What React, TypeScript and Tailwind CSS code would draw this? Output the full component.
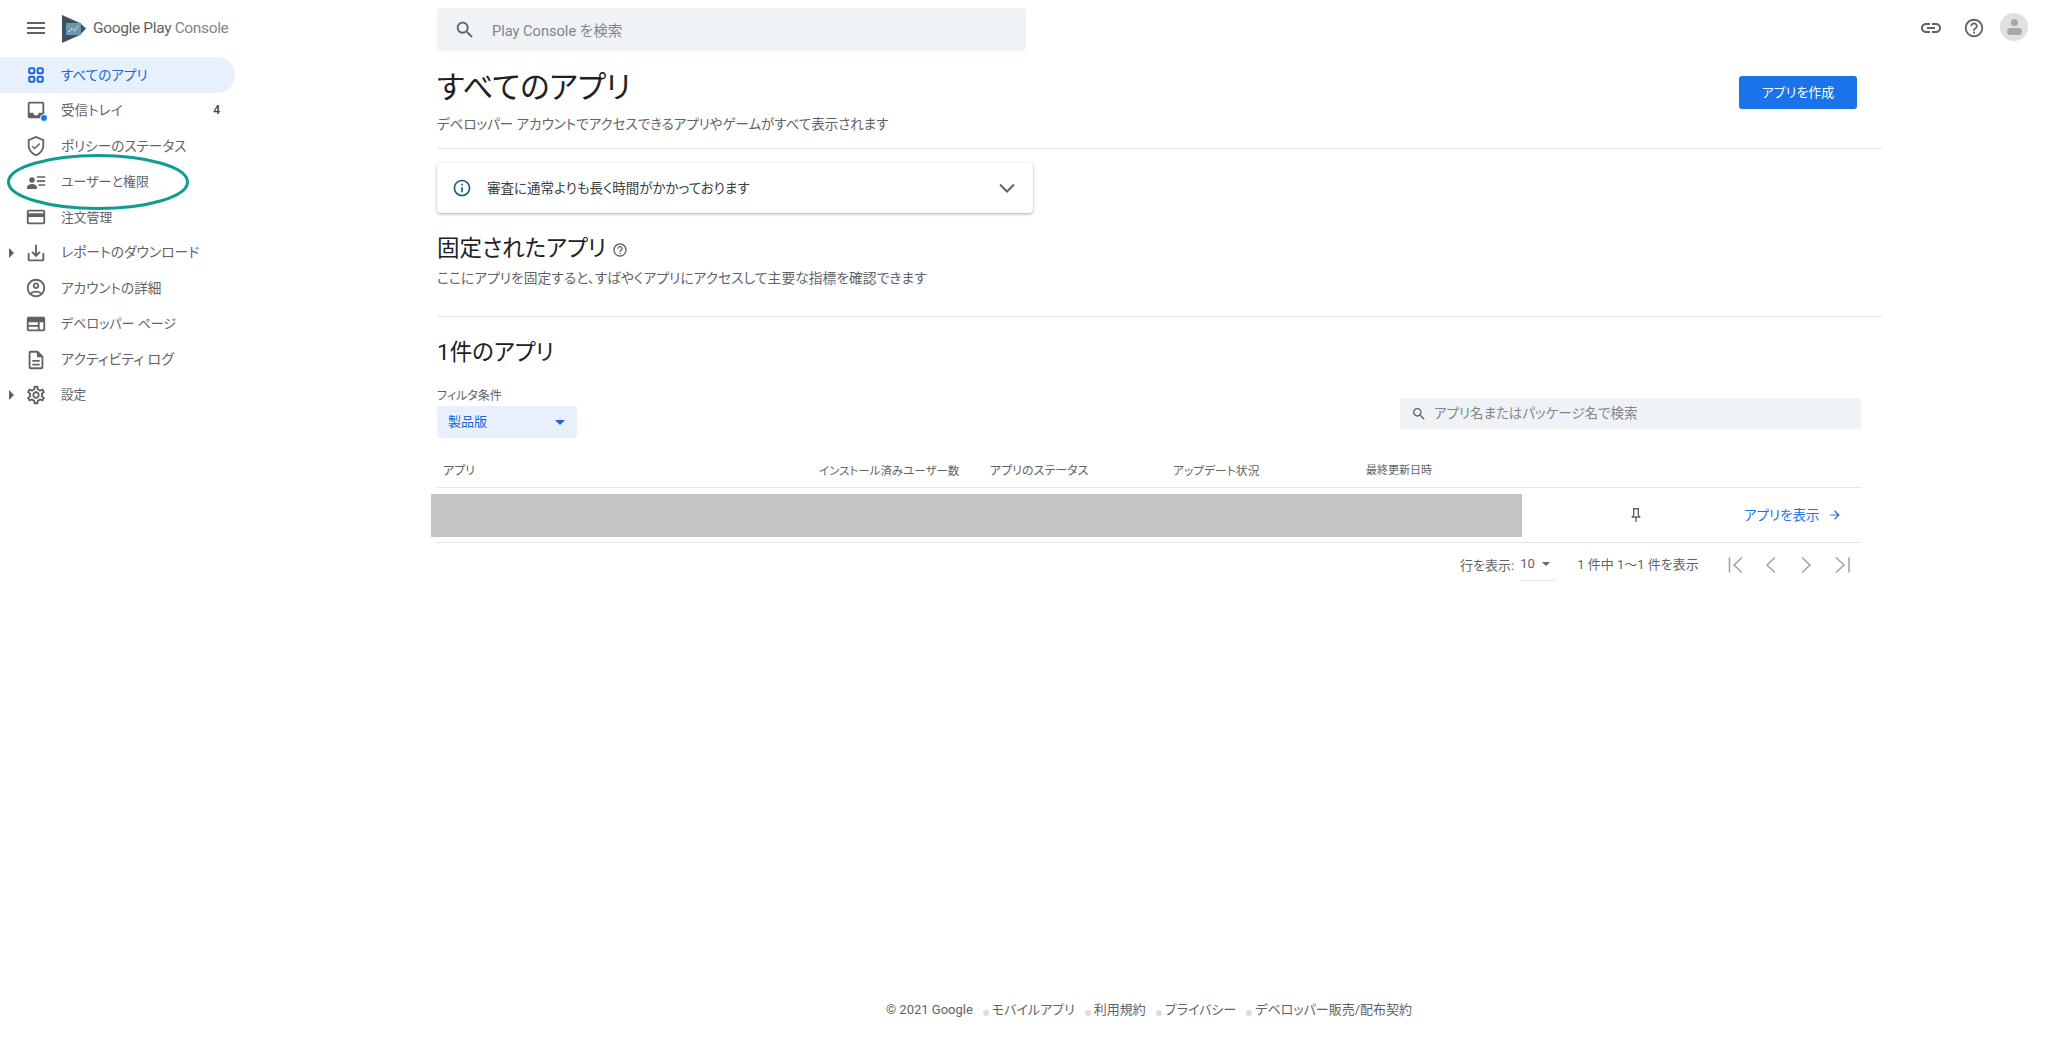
import React from "react";

const ICONS: Record<string, string> = {
  menu: "M3 18h18v-2H3v2zm0-5h18v-2H3v2zm0-7v2h18V6H3z",
  inbox: "M19 3H5c-1.1 0-2 .9-2 2v14c0 1.1.9 2 2 2h14c1.1 0 2-.9 2-2V5c0-1.1-.9-2-2-2zm0 2v10h-4c0 1.66-1.35 3-3 3s-3-1.34-3-3H5V5h14z",
  shield: "M12 1L3 5v6c0 5.55 3.84 10.74 9 12 5.16-1.26 9-6.45 9-12V5l-9-4zm7 10c0 4.52-2.98 8.69-7 9.93-4.02-1.24-7-5.41-7-9.93V6.3l7-3.11 7 3.11V11zm-10.6.6L7.3 12.7l3.2 3.2 6.2-6.2-1.1-1.1-5.1 5.1z",
  users: "M7.6 12.8a3 3 0 1 0 0-6 3 3 0 0 0 0 6zM2.2 19.6v-2c0-2.2 3.4-3.4 5.4-3.4s5.4 1.2 5.4 3.4v2H2.2zM13 5.7h9v1.7h-9zM13 10.2h9v1.7h-9zM14.6 14.5H22v1.7h-7.4z",
  card: "M20 4H4c-1.11 0-1.99.89-1.99 2L2 18c0 1.11.89 2 2 2h16c1.11 0 2-.89 2-2V6c0-1.11-.89-2-2-2zm0 14H4v-6h16v6zm0-10H4V6h16v2z",
  download: "M19 12v7H5v-7H3v7c0 1.1.9 2 2 2h14c1.1 0 2-.9 2-2v-7h-2zm-6 .67l2.59-2.58L17 11.5l-5 5-5-5 1.41-1.41L11 12.67V3h2z",
  account: "M12 2C6.48 2 2 6.48 2 12s4.48 10 10 10 10-4.48 10-10S17.52 2 12 2zM7.35 18.5C8.66 17.56 10.26 17 12 17s3.34.56 4.65 1.5c-1.31.94-2.91 1.5-4.65 1.5s-3.34-.56-4.65-1.5zm10.79-1.38C16.45 15.8 14.32 15 12 15s-4.45.8-6.14 2.12C4.7 15.73 4 13.95 4 12c0-4.42 3.58-8 8-8s8 3.58 8 8c0 1.95-.7 3.73-1.86 5.12zM12 6c-1.93 0-3.5 1.57-3.5 3.5S10.07 13 12 13s3.5-1.57 3.5-3.5S13.93 6 12 6zm0 5c-.83 0-1.5-.67-1.5-1.5S11.17 8 12 8s1.5.67 1.5 1.5S12.83 11 12 11z",
  web: "M20 4H4a2 2 0 0 0-2 2v12a2 2 0 0 0 2 2h16a2 2 0 0 0 2-2V6a2 2 0 0 0-2-2zM4 18v-3h10v3H4zm0-5v-3h10v3H4zm12 5v-8h4v8h-4z",
  description: "M8 16h8v2H8zm0-4h8v2H8zm6-10H6c-1.1 0-2 .9-2 2v16c0 1.1.89 2 1.99 2H18c1.1 0 2-.9 2-2V8l-6-6zm4 18H6V4h7v5h5v11z",
  settings: "M19.43 12.98c.04-.32.07-.64.07-.98 0-.34-.03-.66-.07-.98l2.11-1.65c.19-.15.24-.42.12-.64l-2-3.46c-.09-.16-.26-.25-.44-.25-.06 0-.12.01-.17.03l-2.49 1c-.52-.4-1.08-.73-1.69-.98l-.38-2.65C14.46 2.18 14.25 2 14 2h-4c-.25 0-.46.18-.49.42l-.38 2.65c-.61.25-1.17.59-1.69.98l-2.49-1c-.06-.02-.12-.03-.18-.03-.17 0-.34.09-.43.25l-2 3.46c-.13.22-.07.49.12.64l2.11 1.65c-.04.32-.07.65-.07.98 0 .33.03.66.07.98l-2.11 1.65c-.19.15-.24.42-.12.64l2 3.46c.09.16.26.25.44.25.06 0 .12-.01.17-.03l2.49-1c.52.4 1.08.73 1.69.98l.38 2.65c.03.24.24.42.49.42h4c.25 0 .46-.18.49-.42l.38-2.65c.61-.25 1.17-.59 1.69-.98l2.49 1c.06.02.12.03.18.03.17 0 .34-.09.43-.25l2-3.46c.12-.22.07-.49-.12-.64l-2.11-1.65zm-1.98-1.71c.04.31.05.52.05.73 0 .21-.02.43-.05.73l-.14 1.13.89.7 1.08.84-.7 1.21-1.27-.51-1.04-.42-.9.68c-.43.32-.84.56-1.25.73l-1.06.43-.16 1.13-.2 1.35h-1.4l-.19-1.35-.16-1.13-1.06-.43c-.43-.18-.83-.41-1.23-.71l-.91-.7-1.06.43-1.27.51-.7-1.21 1.08-.84.89-.7-.14-1.13c-.03-.31-.05-.54-.05-.74s.02-.43.05-.73l.14-1.13-.89-.7-1.08-.84.7-1.21 1.27.51 1.04.42.9-.68c.43-.32.84-.56 1.25-.73l1.06-.43.16-1.13.2-1.35h1.39l.19 1.35.16 1.13 1.06.43c.43.18.83.41 1.23.71l.91.7 1.06-.43 1.27-.51.7 1.21-1.07.85-.89.7.14 1.13zM12 8c-2.21 0-4 1.79-4 4s1.79 4 4 4 4-1.79 4-4-1.79-4-4-4zm0 6c-1.1 0-2-.9-2-2s.9-2 2-2 2 .9 2 2-.9 2-2 2z",
  search: "M15.5 14h-.79l-.28-.27C15.41 12.59 16 11.11 16 9.5 16 5.91 13.09 3 9.5 3S3 5.91 3 9.5 5.91 16 9.5 16c1.61 0 3.09-.59 4.23-1.57l.27.28v.79l5 4.99L20.49 19l-4.99-5zm-6 0C7.01 14 5 11.99 5 9.5S7.01 5 9.5 5 14 7.01 14 9.5 11.99 14 9.5 14z",
  link: "M3.9 12c0-1.71 1.39-3.1 3.1-3.1h4V7H7c-2.76 0-5 2.24-5 5s2.24 5 5 5h4v-1.9H7c-1.71 0-3.1-1.39-3.1-3.1zM8 13h8v-2H8v2zm9-6h-4v1.9h4c1.71 0 3.1 1.39 3.1 3.1s-1.39 3.1-3.1 3.1h-4V17h4c2.76 0 5-2.24 5-5s-2.24-5-5-5z",
  help: "M11 18h2v-2h-2v2zm1-16C6.48 2 2 6.48 2 12s4.48 10 10 10 10-4.48 10-10S17.52 2 12 2zm0 18c-4.41 0-8-3.59-8-8s3.59-8 8-8 8 3.59 8 8-3.59 8-8 8zm0-14c-2.21 0-4 1.79-4 4h2c0-1.1.9-2 2-2s2 .9 2 2c0 2-3 1.75-3 5h2c0-2.25 3-2.5 3-5 0-2.21-1.79-4-4-4z",
  info: "M11 7h2v2h-2zm0 4h2v6h-2zm1-9C6.48 2 2 6.48 2 12s4.48 10 10 10 10-4.48 10-10S17.52 2 12 2zm0 18c-4.41 0-8-3.59-8-8s3.59-8 8-8 8 3.59 8 8-3.59 8-8 8z",
  arrow: "M12 4l-1.41 1.41L16.17 11H4v2h12.17l-5.58 5.59L12 20l8-8z",
};

function Icon({ name, className }: { name: string; className?: string }) {
  return (
    <svg viewBox="0 0 24 24" fill="currentColor" fillRule="evenodd" className={className}>
      <path d={ICONS[name]} />
    </svg>
  );
}

function AppsIcon({ className }: { className?: string }) {
  return (
    <svg viewBox="0 0 24 24" fill="none" stroke="currentColor" strokeWidth="2.2" className={className}>
      <rect x="4.6" y="4.6" width="5.6" height="5.6" rx="1.2" />
      <rect x="13.8" y="4.6" width="5.6" height="5.6" rx="1.2" />
      <rect x="4.6" y="13.8" width="5.6" height="5.6" rx="1.2" />
      <rect x="13.8" y="13.8" width="5.6" height="5.6" rx="1.2" />
    </svg>
  );
}

function Logo() {
  return (
    <svg viewBox="0 0 24 28" className="w-[24px] h-[28px]">
      <path d="M0 0 L18 8 L24 13.5 L18 20 L0 28 Z" fill="#3d5260" />
      <path d="M4 8 H19 V20 H4 Z" fill="#6d94ae" />
      <path d="M6.5 17 L10 13.5 L12.5 15.5 L16.5 11" fill="none" stroke="#c9dbe6" strokeWidth="1.3" strokeDasharray="2.4 0.8" />
    </svg>
  );
}

type NavItem = { label: string; icon: string; size: string; active?: boolean; badge?: string; caret?: boolean; dot?: boolean };

const NAV: NavItem[] = [
  { label: "すべてのアプリ", icon: "apps", size: "text-[13.6px]", active: true },
  { label: "受信トレイ", icon: "inbox", size: "text-[13.6px]", badge: "4", dot: true },
  { label: "ポリシーのステータス", icon: "shield", size: "text-[13.6px]" },
  { label: "ユーザーと権限", icon: "users", size: "text-[13px]" },
  { label: "注文管理", icon: "card", size: "text-[12.8px]" },
  { label: "レポートのダウンロード", icon: "download", size: "text-[13.8px]", caret: true },
  { label: "アカウントの詳細", icon: "account", size: "text-[13.6px]" },
  { label: "デベロッパー ページ", icon: "web", size: "text-[13px]" },
  { label: "アクティビティ ログ", icon: "description", size: "text-[14px]" },
  { label: "設定", icon: "settings", size: "text-[12.6px]", caret: true },
];

function SideNav() {
  return (
    <nav className="w-[437px] shrink-0">
      <ul className="w-[235px]">
        {NAV.map((item) => (
          <li
            key={item.label}
            className={`flex items-center h-[35.6px] pr-[15px] rounded-r-full ${item.size} ${
              item.active ? "bg-[#e8f0fe] text-[#1967d2]" : "text-[#5f6368]"
            }`}
          >
            <span className="w-[25px] shrink-0 flex justify-end pr-[11px]">
              {item.caret && <span className="w-0 h-0 border-y-[5px] border-y-transparent border-l-[5px] border-l-[#5f6368]" />}
            </span>
            <span className="relative w-[22px] h-[22px] shrink-0">
              {item.icon === "apps" ? <AppsIcon className="w-[22px] h-[22px]" /> : <Icon name={item.icon} className="w-[22px] h-[22px]" />}
              {item.dot && <span className="absolute right-[-1px] bottom-[-1px] w-[6px] h-[6px] rounded-full bg-[#1a73e8] border border-white box-content" />}
            </span>
            <span className="ml-[14px]">{item.label}</span>
            {item.badge && <span className="ml-auto text-[12px] text-[#3c4043] font-medium">{item.badge}</span>}
          </li>
        ))}
      </ul>
    </nav>
  );
}

function TopBar() {
  return (
    <header className="flex h-[57px] shrink-0">
      <div className="w-[437px] shrink-0 flex items-start pt-[15px]">
        <Icon name="menu" className="w-[24px] h-[24px] ml-[24px] mt-[1px] text-[#5f6368]" />
        <span className="ml-[14px]"><Logo /></span>
        <span className="ml-[7px] mt-[2px] text-[15.5px] leading-[22px] tracking-[-0.35px] text-[#5f6368] whitespace-nowrap">
          Google Play <span className="text-[#80868b]">Console</span>
        </span>
      </div>
      <div className="w-[589px] h-[43px] mt-[8px] flex items-center rounded-[4px] bg-[#f0f3f6] pl-[17px] text-[#80868b]">
        <Icon name="search" className="w-[22px] h-[22px] text-[#5f6368]" />
        <span className="ml-[16px] text-[14.6px] mt-[5px]">Play Console を検索</span>
      </div>
      <div className="ml-auto flex items-start pt-[15px] pr-[20px] text-[#5f6368]">
        <Icon name="link" className="w-[24px] h-[24px] mt-[1px]" />
        <Icon name="help" className="w-[22px] h-[22px] mt-[2px] ml-[20px]" />
        <span className="ml-[15px] -mt-[2px] w-[28px] h-[28px] rounded-full bg-[#e0e0e0] flex flex-col items-center justify-center">
          <span className="w-[7px] h-[7px] rounded-full bg-[#a8a8a8]" />
          <span className="w-[15px] h-[7px] mt-[2px] rounded-full bg-[#a8a8a8]" />
        </span>
      </div>
    </header>
  );
}

function AppTable() {
  return (
    <div className="w-[1424px]">
      <div className="grid grid-cols-[376px_171px_183px_193px_1fr] pl-[6px] h-[50px] items-end pb-[8px] border-b border-[#e4e6e8] leading-[16px] text-[#5f6368]">
        <span className="text-[12px]">アプリ</span>
        <span className="text-[11.5px]">インストール済みユーザー数</span>
        <span className="text-[12px]">アプリのステータス</span>
        <span className="text-[11.8px]">アップデート状況</span>
        <span className="text-[11px]">最終更新日時</span>
      </div>
      <div className="flex items-center h-[55px] border-b border-[#e4e6e8]">
        <div className="w-[1091px] h-[43px] -ml-[6px] bg-[#c4c4c4] shrink-0" />
        <svg viewBox="0 0 16 16" fill="none" stroke="#5f6368" strokeWidth="1.4" className="w-[16px] h-[16px] ml-[106px]">
          <path d="M5 1.7h6M5.7 1.7v6.8M10.3 1.7v6.8M3.8 10h8.4M8 10v5" />
          <path d="M5.7 8.5 3.8 10M10.3 8.5l1.9 1.5" />
        </svg>
        <span className="ml-[100px] text-[13.5px] text-[#1a73e8]">アプリを表示</span>
        <Icon name="arrow" className="w-[14px] h-[14px] ml-[8px] text-[#1a73e8]" />
      </div>
      <div className="flex items-center h-[43px] pl-[1023px] text-[13px] text-[#5f6368]">
        <span className="mt-[3px]">行を表示:</span>
        <span className="ml-[6px] w-[36px] h-[32px] flex items-center border-b border-[#e4e6e8] text-[#5f6368]">
          10
          <span className="ml-[7px] w-0 h-0 border-x-[4.5px] border-x-transparent border-t-[4.5px] border-t-[#5f6368]" />
        </span>
        <span className="ml-[21px] whitespace-nowrap">1 件中 1〜1 件を表示</span>
        <svg viewBox="0 0 130 24" fill="none" stroke="#9aa0a6" strokeWidth="1.5" className="ml-[24px] w-[130px] h-[24px]">
          <path d="M6.5 4.5v15M19 4.5 11 12l8 7.5" />
          <path d="M52 4.5 44 12l8 7.5" />
          <path d="M79 4.5 87 12l-8 7.5" />
          <path d="M113 4.5 121 12l-8 7.5M126 4.5v15" />
        </svg>
      </div>
    </div>
  );
}

function Main() {
  return (
    <main className="w-[1445px] flex flex-col">
      <div className="flex justify-between h-[92px] border-b border-[#e4e6e8] pr-[25px]">
        <div>
          <h1 className="mt-[13px] text-[30.4px] leading-[36px] text-[#202124]">すべてのアプリ</h1>
          <p className="mt-[9px] text-[13.5px] leading-[18px] text-[#5f6368]">デベロッパー アカウントでアクセスできるアプリやゲームがすべて表示されます</p>
        </div>
        <button className="mt-[19px] w-[118px] h-[33px] rounded-[3px] bg-[#1a73e8] text-white text-[13px]">アプリを作成</button>
      </div>

      <div className="mt-[14px] w-[596px] h-[50px] flex items-center rounded-[4px] pl-[15px] pr-[14px] bg-white shadow-[0_1px_3px_rgba(60,64,67,0.45)]">
        <Icon name="info" className="w-[20px] h-[20px] text-[#125e7f]" />
        <span className="ml-[15px] text-[13.5px] text-[#3c4043]">審査に通常よりも長く時間がかかっております</span>
        <svg viewBox="0 0 24 24" fill="none" stroke="#5f6368" strokeWidth="2" className="ml-auto w-[24px] h-[24px]">
          <path d="M5 8.5 12 15.5 19 8.5" />
        </svg>
      </div>

      <div className="mt-[21px] flex items-center">
        <h2 className="text-[22.5px] leading-[28px] text-[#202124]">固定されたアプリ</h2>
        <Icon name="help" className="ml-[6px] mt-[3px] w-[16px] h-[16px] text-[#5f6368]" />
      </div>
      <p className="mt-[7px] text-[13.8px] leading-[18px] text-[#5f6368]">ここにアプリを固定すると、すばやくアプリにアクセスして主要な指標を確認できます</p>
      <div className="mt-[29px] border-b border-[#e4e6e8]" />

      <h2 className="mt-[21px] text-[22.5px] leading-[28px] text-[#202124]">1件のアプリ</h2>

      <div className="mt-[23px] w-[1424px] flex justify-between items-start">
        <div>
          <div className="text-[12px] leading-[14px] text-[#5f6368]">フィルタ条件</div>
          <div className="mt-[3px] w-[140px] h-[32px] flex items-center justify-between rounded-[3px] bg-[#e8f0fe] pl-[11px] pr-[12px] text-[13px] text-[#1967d2]">
            製品版
            <span className="w-0 h-0 border-x-[5px] border-x-transparent border-t-[5px] border-t-[#1967d2]" />
          </div>
        </div>
        <div className="mt-[9px] w-[461px] h-[31px] flex items-center rounded-[2px] bg-[#f0f3f6] pl-[11px] text-[13.5px] text-[#80868b]">
          <Icon name="search" className="w-[16px] h-[16px] text-[#5f6368]" />
          <span className="ml-[7px]">アプリ名またはパッケージ名で検索</span>
        </div>
      </div>

      <AppTable />

      <footer className="mt-auto mb-[34px] w-[1424px] flex justify-center items-center text-[13px] leading-[20px] text-[#5f6368]">
        <span>© 2021 Google</span>
        {["モバイルアプリ", "利用規約", "プライバシー", "デベロッパー販売/配布契約"].map((link) => (
          <span key={link} className="flex items-center">
            <span className="ml-[10px] mr-[3px] mt-[5px] w-[6px] h-[6px] rounded-full bg-[#dadce0]" />
            {link}
          </span>
        ))}
      </footer>
    </main>
  );
}

export default function App() {
  return (
    <div className="relative h-screen flex flex-col overflow-hidden bg-white font-['Roboto','Noto_Sans_CJK_JP',sans-serif] [font-feature-settings:'palt']">
      <TopBar />
      <div className="flex flex-1 min-h-0">
        <SideNav />
        <Main />
      </div>
      {/* annotation circled on top of the screenshot */}
      <svg viewBox="0 0 184 58" fill="none" className="absolute left-[6px] top-[153px] w-[184px] h-[58px]">
        <ellipse cx="92" cy="29" rx="89.5" ry="26.5" stroke="#0f9c92" strokeWidth="3" />
      </svg>
    </div>
  );
}
